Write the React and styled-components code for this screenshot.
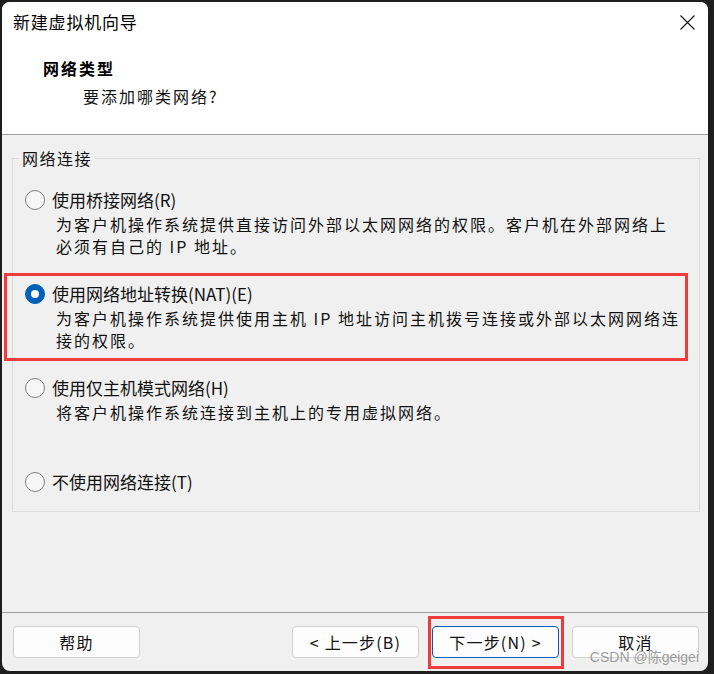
import React from "react";
import styled, { createGlobalStyle, css } from "styled-components";

const GlobalStyle = createGlobalStyle`
  html, body { margin: 0; padding: 0; background: #1e1e1e; }
  body {
    width: 714px;
    height: 674px;
    overflow: hidden;
    font-family: "Noto Sans CJK SC", "Noto Sans", sans-serif;
    color: #000;
  }
  #root { padding: 2px 0 0 2px; }
`;

const Window = styled.div`
  position: relative;
  width: 706px;
  height: 669px;
  background: #f0f0f0;
  border-radius: 8px;
  overflow: hidden;
  display: flex;
  flex-direction: column;
`;

const Header = styled.header`
  height: 132px;
  background: #ffffff;
  border-bottom: 1px solid #a0a0a0;
  display: flex;
  flex-direction: column;
`;

const TitleBar = styled.div`
  height: 40px;
  display: flex;
  align-items: center;
  justify-content: space-between;
  padding-left: 11px;
`;

const Title = styled.div`
  font-size: 17px;
  letter-spacing: 0.8px;
  line-height: 22px;
`;

const CloseButton = styled.div`
  width: 42px;
  height: 40px;
  display: flex;
  align-items: center;
  justify-content: center;
`;

const Heading = styled.div`
  margin: 15px 0 0 41px;
  font-size: 16px;
  font-weight: 700;
  letter-spacing: 2px;
  line-height: 22px;
`;

const SubHeading = styled.div`
  margin: 6px 0 0 81px;
  font-size: 16px;
  letter-spacing: 2px;
  line-height: 22px;
  color: #111;
`;

const Content = styled.main`
  flex: 1;
  padding: 12px 8px 0 10px;
`;

const Group = styled.fieldset`
  margin: 0;
  padding: 20px 0 18px 0;
  border: 1px solid #dcdcdc;
  min-width: 0;
`;

const Legend = styled.legend`
  margin-left: 6px;
  padding: 0 3px;
  font-size: 16px;
  letter-spacing: 1.5px;
  line-height: 22px;
  color: #111;
`;

const Option = styled.div`
  position: relative;
  height: ${(p) => (p.$last ? "auto" : "94px")};
  padding-left: 12px;
  ${(p) =>
    p.$highlight &&
    css`
      &::after {
        content: "";
        position: absolute;
        left: -9px;
        right: 11px;
        top: -10px;
        bottom: 16px;
        border: 3px solid #ee3b3b;
        pointer-events: none;
      }
    `}
`;

const LabelRow = styled.label`
  display: flex;
  align-items: center;
  gap: 7px;
  height: 22px;
  font-size: 17px;
  line-height: 22px;
  color: #111;
`;

const Radio = styled.span`
  box-sizing: border-box;
  width: 20px;
  height: 20px;
  border-radius: 50%;
  flex: none;
  display: flex;
  align-items: center;
  justify-content: center;
  ${(p) =>
    p.$checked
      ? css`
          background: #005fb8;
          border: 1px solid #005fb8;
          &::before {
            content: "";
            width: 8px;
            height: 8px;
            border-radius: 50%;
            background: #ffffff;
          }
        `
      : css`
          background: #f6f6f6;
          border: 1px solid #7f7f7f;
        `}
`;

const Desc = styled.div`
  margin: 2px 0 0 31px;
  font-size: 16px;
  letter-spacing: 2px;
  line-height: 22px;
  white-space: nowrap;
  color: #111;
`;

const Footer = styled.footer`
  height: 45px;
  border-top: 1px solid #a0a0a0;
  display: flex;
  align-items: flex-start;
  gap: 13px;
  padding: 13px 9px 0 11px;
`;

const Spacer = styled.div`
  flex: 1;
`;

const Button = styled.button`
  position: relative;
  box-sizing: border-box;
  width: 127px;
  height: 32px;
  border: 1px solid ${(p) => (p.$primary ? "#005fb8" : "#d0d0d0")};
  border-radius: 4px;
  background: #fdfdfd;
  font-family: "Noto Sans CJK SC", "Noto Sans", sans-serif;
  font-size: 16px;
  letter-spacing: 1.2px;
  color: #111;
  padding: 0;
  ${(p) =>
    p.$highlight &&
    css`
      &::after {
        content: "";
        position: absolute;
        left: -5px;
        right: -6px;
        top: -11px;
        bottom: -12px;
        border: 3px solid #ee3b3b;
        pointer-events: none;
      }
    `}
`;

const Watermark = styled.div`
  position: absolute;
  right: 9px;
  bottom: 6px;
  font-family: "Liberation Sans", "Noto Sans CJK SC", sans-serif;
  font-size: 14px;
  line-height: 16px;
  color: rgba(140, 140, 140, 0.85);
  pointer-events: none;
`;

const CloseIcon = () => (
  <svg width="15" height="15" viewBox="0 0 15 15">
    <path d="M0.5 0.5 L14.5 14.5 M14.5 0.5 L0.5 14.5" stroke="#111" strokeWidth="1.1" fill="none" />
  </svg>
);

const options = [
  {
    label: "使用桥接网络(R)",
    lines: ["为客户机操作系统提供直接访问外部以太网网络的权限。客户机在外部网络上", "必须有自己的 IP 地址。"],
  },
  {
    label: "使用网络地址转换(NAT)(E)",
    lines: ["为客户机操作系统提供使用主机 IP 地址访问主机拨号连接或外部以太网网络连", "接的权限。"],
    checked: true,
    highlight: true,
  },
  {
    label: "使用仅主机模式网络(H)",
    lines: ["将客户机操作系统连接到主机上的专用虚拟网络。"],
  },
  {
    label: "不使用网络连接(T)",
    lines: [],
  },
];

export default function App() {
  return (
    <>
      <GlobalStyle />
      <Window>
        <Header>
          <TitleBar>
            <Title>新建虚拟机向导</Title>
            <CloseButton>
              <CloseIcon />
            </CloseButton>
          </TitleBar>
          <Heading>网络类型</Heading>
          <SubHeading>要添加哪类网络?</SubHeading>
        </Header>
        <Content>
          <Group>
            <Legend>网络连接</Legend>
            {options.map((o, i) => (
              <Option key={o.label} $highlight={o.highlight} $last={i === options.length - 1}>
                <LabelRow>
                  <Radio $checked={o.checked} />
                  {o.label}
                </LabelRow>
                {o.lines.length > 0 && (
                  <Desc>
                    {o.lines.map((l, j) => (
                      <React.Fragment key={j}>
                        {j > 0 && <br />}
                        {l}
                      </React.Fragment>
                    ))}
                  </Desc>
                )}
              </Option>
            ))}
          </Group>
        </Content>
        <Footer>
          <Button>帮助</Button>
          <Spacer />
          <Button>&lt; 上一步(B)</Button>
          <Button $primary $highlight>下一步(N) &gt;</Button>
          <Button>取消</Button>
        </Footer>
        <Watermark>CSDN @陈geigei</Watermark>
      </Window>
    </>
  );
}
